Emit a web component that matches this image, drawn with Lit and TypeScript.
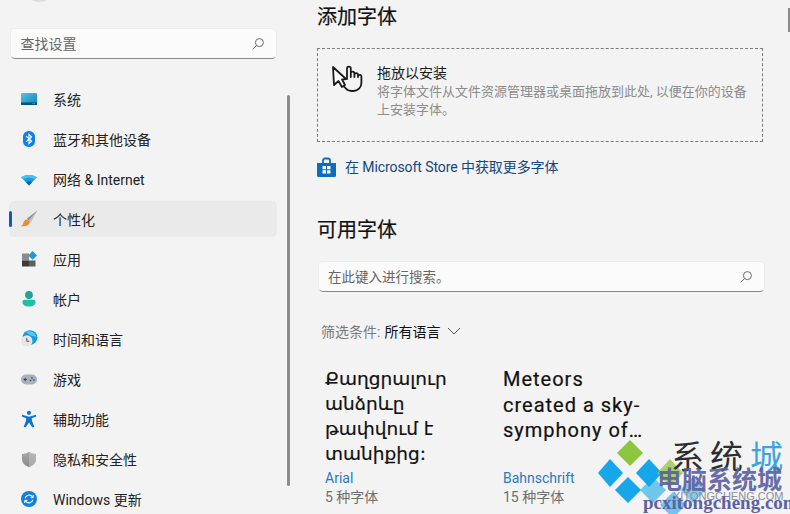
import { LitElement, html, css, svg } from "lit";
import { customElement } from "lit/decorators.js";

const SEARCH = html`<svg class="mag" viewBox="0 0 14 14" width="14" height="14" fill="none" stroke="#6a6a6a" stroke-width="1"><circle cx="8.4" cy="5.6" r="4"/><path d="M5.5 8.5 1.8 12.4"/></svg>`;

const ICONS: Record<string, unknown> = {
  system: svg`<defs><linearGradient id="g1" x1="0" y1="0" x2="1" y2="1"><stop offset="0" stop-color="#53c6e6"/><stop offset="1" stop-color="#0f7fb8"/></linearGradient></defs>
    <rect x="1" y="3" width="16" height="12" rx="1.2" fill="url(#g1)"/><path d="M1 12.5h16V14a1 1 0 0 1-1 1H2a1 1 0 0 1-1-1z" fill="#0b4f7e"/><path d="M12.5 13.6h.8M14.2 13.6h.8" stroke="#9fdcf0" stroke-width=".7"/>`,
  bt: svg`<rect x="3" y="1" width="12" height="16" rx="5.6" fill="#0f80e8"/><path d="M6 6.2 11.6 11 9 13.6V4.4L11.6 7 6 11.8" fill="none" stroke="#fff" stroke-width="1.1"/>`,
  wifi: svg`<path d="M1 7.2Q9 2.8 17 7.2L9 15.4z" fill="#1a9de0"/><path d="M1 7.2Q9 2.8 17 7.2L15 9.2Q9 6 3 9.2z" fill="#4fc0ee"/><path d="M6 12.2Q9 10.4 12 12.2L9 15.4z" fill="#0c5fb0"/>`,
  brush: svg`<path d="M17.200 .6 6.800 8.800l3.600 3.600z" fill="#8d8d8d"/><path d="M17.200 .6 8.600 10.600l1.800 1.800z" fill="#c4c4c4"/><path d="M6.600 9.400c-2.200.4-3 2.400-3.400 4-.3 1.100-1.100 1.800-2.400 2.800 3.600.6 8.800-.4 9-4.400z" fill="#f08a2c"/>`,
  apps: svg`<rect x="2" y="3.5" width="7" height="7" fill="#8c8c8c"/><rect x="2" y="10.5" width="7" height="6" fill="#3b3b3b"/><rect x="9" y="10.5" width="6.5" height="6" fill="#5f5f5f"/><path d="M12.6 1 17 5.4l-4.4 4.4-4.4-4.4z" fill="#169ae0"/>`,
  user: svg`<circle cx="9" cy="5" r="3.9" fill="#1fa593"/><path d="M2.4 12a2.2 2.2 0 0 1 2.2-2.2h8.8a2.2 2.2 0 0 1 2.2 2.2c0 3-3.2 4.6-6.6 4.6S2.400 15 2.400 12z" fill="#24bda8"/>`,
  time: svg`<circle cx="10" cy="7.600" r="7.400" fill="#149ae0"/><path d="M6 2c4-2 9 0 10.500 5-3-1-7-1-10.500-5z" fill="#57c9f0"/><circle cx="6.800" cy="11" r="5.700" fill="#e6e6e6"/><path d="M6.800 8v3.300h2.500" fill="none" stroke="#555" stroke-width="1"/>`,
  game: svg`<rect x="1" y="4.500" width="16" height="10" rx="5" fill="#a9b2bb"/><path d="M3.500 9.500h3.400M5.200 7.800v3.400" stroke="#333" stroke-width=".9"/><circle cx="12" cy="8" r=".9" fill="#2a6fb0"/><circle cx="14" cy="10" r=".9" fill="#2a6fb0"/><circle cx="10.500" cy="10.500" r=".8" fill="#444"/>`,
  access: svg`<circle cx="9" cy="2.800" r="2.100" fill="#0f74c8"/><path d="M2.200 4.800 9 6.800l6.800-2 .5 1.700-4.600 1.800.6 3.500 2 5-1.900.8L9 12.600l-3.400 5-1.900-.8 2-5 .6-3.500L1.700 6.500z" fill="#0f74c8"/>`,
  shield: svg`<defs><linearGradient id="g2" x1="0" y1="0" x2="0" y2="1"><stop offset="0" stop-color="#a8a8a8"/><stop offset="1" stop-color="#8a8a8a"/></linearGradient></defs><path d="M9 1.800c2 1.500 4.500 2.200 7 2.200v5c0 4-3 6.700-7 8.200-4-1.500-7-4.200-7-8.200V4c2.500 0 5-.7 7-2.200z" fill="url(#g2)"/><path d="M9 1.800c2 1.500 4.500 2.200 7 2.200v5c0 4-3 6.700-7 8.200z" fill="#c2c2c2" opacity=".55"/>`,
  update: svg`<circle cx="9" cy="9" r="8" fill="#0f80e0"/><path d="M5.200 8.200A4 4 0 0 1 12 6.400l.9.900M12.800 9.800A4 4 0 0 1 6 11.600l-.9-.9" fill="none" stroke="#fff" stroke-width="1.200"/><path d="M13.200 5v2.700h-2.700M4.800 13v-2.700h2.700" fill="none" stroke="#fff" stroke-width="1"/>`,
};

const NAV = [
  ["system", "系统"],
  ["bt", "蓝牙和其他设备"],
  ["wifi", "网络 & Internet"],
  ["brush", "个性化"],
  ["apps", "应用"],
  ["user", "帐户"],
  ["time", "时间和语言"],
  ["game", "游戏"],
  ["access", "辅助功能"],
  ["shield", "隐私和安全性"],
  ["update", "Windows 更新"],
];

const CARDS = [
  { cls: "arm", lines: ["Քաղցրալուր", "անձրևը", "թափվում է", "տանիքից:"], name: "Arial", count: "5 种字体" },
  { cls: "bah", lines: ["Meteors", "created a sky-", "symphony of…"], name: "Bahnschrift", count: "15 种字体" },
];

@customElement("app-root")
export class AppRoot extends LitElement {
  static styles = css`
    :host {
      display: block;
      width: 790px;
      height: 514px;
      overflow: hidden;
      position: relative;
      background: #f3f3f3;
      color: #1b1b1b;
      font-family: Roboto, "Noto Sans CJK SC", sans-serif;
      font-size: 14px;
    }
    .layout { display: grid; grid-template-columns: 300px 1fr; height: 514px; }
    .side { position: relative; padding-top: 28px; overflow: hidden; }
    .avatar {
      position: absolute; left: 24px; top: -29px; width: 31px; height: 31px;
      border-radius: 50%; background: #dcdcdc;
    }
    .search {
      box-sizing: border-box; display: flex; align-items: center; justify-content: space-between;
      background: #fbfbfb; border: 1px solid #ececec; border-bottom: 1px solid #8a8a8a;
      border-radius: 5px; color: #666;
    }
    .search span { position: relative; top: -1px; }
    .side .search { width: 267px; height: 31px; margin-left: 9.500px; padding: 0 11px 0 10px; }
    .mag { display: block; }
    nav { margin: 20px 0 0 9px; width: 268px; display: flex; flex-direction: column; }
    .item {
      position: relative; height: 36px; margin: 2px 0; border-radius: 5px;
      display: flex; align-items: center; padding-left: 11px; gap: 15px; color: #222;
    }
    .item.on { background: #eaeaea; }
    .item.on::before {
      content: ""; position: absolute; left: 0; top: 10px; width: 3px; height: 16px;
      border-radius: 2px; background: #0f5cad;
    }
    .item svg { flex: none; display: block; }
    .sbar { position: absolute; left: 287px; top: 95px; width: 2.500px; height: 391px; background: #8b8b8b; border-radius: 2px; }
    main { padding-left: 17px; position: relative; }
    .rbar { position: absolute; right: 0; top: 8px; width: 2px; height: 24px; background: #8b8b8b; }
    h2 { margin: 0; font-size: 20px; font-weight: 400; line-height: 34px; height: 32px; color: #111; -webkit-text-stroke: .2px #111; }
    .drop {
      box-sizing: border-box; width: 446px; height: 94px; margin-top: 16px;
      border: 1.500px dashed #7c7c7c;
      display: flex; padding: 15px 0 0 12px; gap: 13px;
    }
    .drop svg { flex: none; }
    .drop .t { line-height: 18px; }
    .drop .h { color: #1b1b1b; }
    .drop .d { color: #8c8c8c; font-size: 13px; line-height: 18px; margin-top: 1px; white-space: nowrap; }
    .store { display: flex; align-items: center; gap: 9px; height: 20px; margin-top: 15px; color: #10487f; }
    .store svg { flex: none; }
    .store span { position: relative; top: -1px; letter-spacing: -.08px; }
    .h2b { margin-top: 36px; }
    main .search { width: 447px; height: 31px; margin: 16px 0 0 1px; padding: 0 11px 0 9px; font-size: 13.500px; }
    .filter { display: flex; align-items: center; height: 20px; margin: 29px 0 0 4px; color: #7a7a7a; }
    .filter b { font-weight: 400; color: #111; margin-left: 4px; }
    .filter svg { margin-left: 7px; }
    .cards { display: flex; margin: 25px 0 0 8px; }
    .card { width: 178px; flex: none; }
    .sample { height: 100px; font-size: 20px; line-height: 25px; color: #111; white-space: nowrap; }
    .arm { font-family: "DejaVu Sans", sans-serif; font-size: 18.500px; -webkit-text-stroke: .2px #111; }
    .bah { font-family: Roboto, sans-serif; letter-spacing: 1px; line-height: 25.500px; padding-top: 1px; box-sizing: border-box; -webkit-text-stroke: .2px #111; }
    .name { margin-top: 3px; line-height: 19px; height: 19px; color: #2a79c2; font-size: 14px; }
    .count { line-height: 19px; color: #6e6e6e; font-size: 14px; }
    .wm { position: absolute; left: 590px; top: 430px; width: 200px; height: 84px; pointer-events: none; }
    .wm svg { position: absolute; inset: 0; }
    .wm span { position: absolute; white-space: nowrap; }
    .w1 { left: 81px; top: 9px; font-size: 33px; line-height: 38px; letter-spacing: 6px; color: #2e2e2e; font-weight: 400; }
    .w2 { left: 160px; top: 9px; font-size: 33px; line-height: 38px; color: #3aa3e0; font-weight: 400; }
    .w3 { left: 67px; top: 37px; font-size: 25px; line-height: 28px; font-weight: 700; color: #5a5f9f; opacity: .9; }
    .w4 { left: 83px; top: 60px; font-size: 11px; line-height: 13px; color: #8a8f99; font-family: "Liberation Sans", sans-serif; }
    .w5 { left: 53px; top: 62px; font-size: 19px; line-height: 22px; font-weight: 700; color: #5d61a0; font-family: "Liberation Serif", serif; }
  `;

  render() {
    return html`
      <div class="layout" lang="zh-CN">
        <aside class="side">
          <div class="avatar"></div>
          <div class="search"><span>查找设置</span>${SEARCH}</div>
          <nav>
            ${NAV.map(
              ([k, label], i) => html`<div class="item ${i === 3 ? "on" : ""}">
                <svg viewBox="0 0 18 18" width="18" height="18">${ICONS[k]}</svg><span>${label}</span>
              </div>`
            )}
          </nav>
          <div class="sbar"></div>
        </aside>
        <main>
          <div class="rbar"></div>
          <h2>添加字体</h2>
          <div class="drop">
            <svg viewBox="0 0 34 30" width="34" height="30" fill="none" stroke="#1a1a1a" stroke-width="1.800" stroke-linejoin="round" stroke-linecap="round">
              <path d="M17 15V4.500a1.900 1.900 0 0 1 3.800 0V13 9.500a1.800 1.800 0 0 1 3.600 0V13 11a1.800 1.800 0 0 1 3.600 0v2-.5a1.700 1.700 0 0 1 3.400 0V19a8 8 0 0 1-8 8h-2a8 8 0 0 1-6-3l-3.200-3.500"/>
              <path d="M3 3l1 18 4.500-4 3.500 6 3-2-3-5.500 4-.5z" fill="#fff"/>
            </svg>
            <div class="t">
              <div class="h">拖放以安装</div>
              <div class="d">将字体文件从文件资源管理器或桌面拖放到此处, 以便在你的设备<br />上安装字体。</div>
            </div>
          </div>
          <div class="store">
            <svg viewBox="0 0 19 20" width="19" height="20">
              <path d="M6 6V3.500A2 2 0 0 1 8 1.500h3a2 2 0 0 1 2 2V6" fill="none" stroke="#0f6cbd" stroke-width="1.800"/>
              <path d="M0 6h19v12.500a1.500 1.500 0 0 1-1.500 1.500h-16A1.500 1.500 0 0 1 0 18.500z" fill="#0f6cbd"/>
              <path d="M5.500 9h3.500v3.300H5.500zM10 9h3.500v3.300H10zM5.500 13.300h3.500v3.300H5.500zM10 13.300h3.500v3.300H10z" fill="#fff"/>
            </svg>
            <span>在 Microsoft Store 中获取更多字体</span>
          </div>
          <h2 class="h2b">可用字体</h2>
          <div class="search"><span>在此键入进行搜索。</span>${SEARCH}</div>
          <div class="filter">
            <span>筛选条件:</span><b>所有语言</b>
            <svg viewBox="0 0 14 8" width="14" height="8" fill="none" stroke="#555" stroke-width="1"><path d="M1 1l6 6 6-6"/></svg>
          </div>
          <div class="cards">
            ${CARDS.map(
              (c) => html`<div class="card">
                <div class="sample ${c.cls}">${c.lines.map((l) => html`<div>${l}</div>`)}</div>
                <div class="name">${c.name}</div>
                <div class="count">${c.count}</div>
              </div>`
            )}
          </div>
        </main>
      </div>
      <div class="wm" lang="zh-CN">
        <svg viewBox="0 0 200 84" width="200" height="84">
          <path d="M40 10l13 13-13 13-13-13z" fill="#8cc63f"/>
          <path d="M20 29l13 14-13 14L8 43z" fill="#16a6ea"/>
          <path d="M59 29l13 14-13 14-13-14z" fill="#16a6ea"/>
          <path d="M38 47l13 13-13 13-13-13z" fill="#16a6ea"/>
          <path d="M80 29l13 14-13 14-13-14z" fill="#8cc63f" opacity=".75"/>
          <path d="M63 47l13 13-13 13-13-13z" fill="#16a6ea" opacity=".6"/>
          <path d="M103 47l13 13-13 13-13-13z" fill="#16a6ea" opacity=".5"/>
          <path d="M83 62l13 13-13 13-13-13z" fill="#16a6ea" opacity=".6"/>
        </svg>
        <span class="w1">系统</span>
        <span class="w2">城</span>
        <span class="w4">XITONGCHENG.COM</span>
        <span class="w3">电脑系统城</span>
        <span class="w5">pcxitongcheng.com</span>
      </div>
    `;
  }
}
